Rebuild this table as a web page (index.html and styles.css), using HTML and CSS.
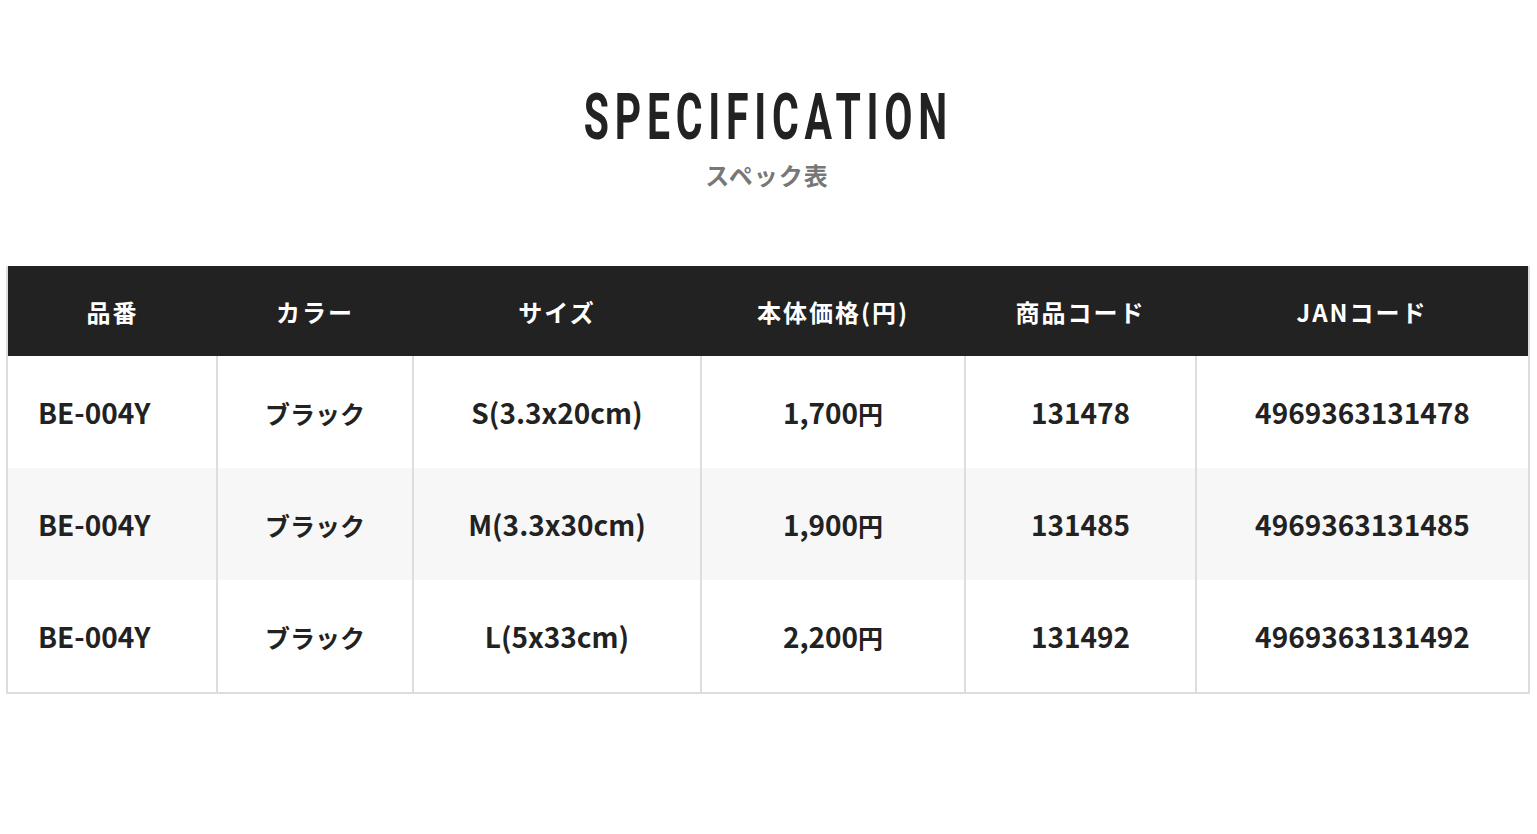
FILE: index.html
```html
<!DOCTYPE html>
<html lang="ja">
<head>
<meta charset="utf-8">
<title>SPECIFICATION</title>
<link rel="stylesheet" href="styles.css">
</head>
<body>
<section class="spec">
  <div class="spec-head">
    <h2 class="spec-title"><span class="spec-title-text">SPECIFICATION</span></h2>
    <p class="spec-sub">スペック表</p>
  </div>
  <div class="spec-wrap">
    <table class="spec-table">
      <colgroup>
        <col class="c1"><col class="c2"><col class="c3"><col class="c4"><col class="c5"><col class="c6">
      </colgroup>
      <thead>
        <tr><th>品番</th><th>カラー</th><th>サイズ</th><th>本体価格(円)</th><th>商品コード</th><th>JANコード</th></tr>
      </thead>
      <tbody>
        <tr><td class="left">BE-004Y</td><td><span class="ja">ブラック</span></td><td>S(3.3x20cm)</td><td>1,700<span class="ja">円</span></td><td>131478</td><td>4969363131478</td></tr>
        <tr class="alt"><td class="left">BE-004Y</td><td><span class="ja">ブラック</span></td><td>M(3.3x30cm)</td><td>1,900<span class="ja">円</span></td><td>131485</td><td>4969363131485</td></tr>
        <tr><td class="left">BE-004Y</td><td><span class="ja">ブラック</span></td><td>L(5x33cm)</td><td>2,200<span class="ja">円</span></td><td>131492</td><td>4969363131492</td></tr>
      </tbody>
    </table>
  </div>
</section>
</body>
</html>
```
FILE: styles.css
```css
html, body {
  margin: 0;
  padding: 0;
  background: #fff;
}
body {
  font-family: "Noto Sans CJK JP", "Noto Sans", sans-serif;
  color: #222;
}
.spec {
  padding-top: 80px;
}
.spec-head {
  text-align: center;
  padding-right: 3px;
}
.spec-title {
  margin: 0;
  font-family: "Roboto", "Liberation Sans", sans-serif;
  font-weight: 700;
  font-size: 64px;
  line-height: 76px;
  color: #222;
}
.spec-title-text {
  display: inline-block;
  letter-spacing: 9px;
  margin-right: -2px;
  transform: scaleX(0.64);
}
.spec-sub {
  margin: 4px 0 0;
  font-size: 24px;
  line-height: 30px;
  font-weight: 700;
  color: #777;
  letter-spacing: 1px;
}
.spec-wrap {
  margin-top: 76px;
  padding: 0 7px 0 6px;
}
.spec-table {
  width: 100%;
  border-collapse: collapse;
  table-layout: fixed;
  border-left: 2px solid #ddd;
  border-right: 2px solid #ddd;
  border-bottom: 2px solid #ddd;
}
.c1 { width: 210px; }
.c2 { width: 196px; }
.c3 { width: 288px; }
.c4 { width: 264px; }
.c5 { width: 231px; }
.c6 { width: auto; }
.spec-table th {
  background: #222;
  color: #fff;
  height: 90px;
  padding: 0;
  font-size: 24px;
  font-weight: 700;
  letter-spacing: 2px;
  text-align: center;
}
.spec-table td {
  height: 112px;
  padding: 0;
  font-size: 28px;
  font-weight: 700;
  text-align: center;
  border-left: 2px solid #ddd;
  color: #222;
}
.spec-table td.left {
  text-align: left;
  padding-left: 30px;
}
.spec-table .ja {
  font-size: 25px;
}
.spec-table tr.alt td {
  background: #f7f7f7;
}
```
